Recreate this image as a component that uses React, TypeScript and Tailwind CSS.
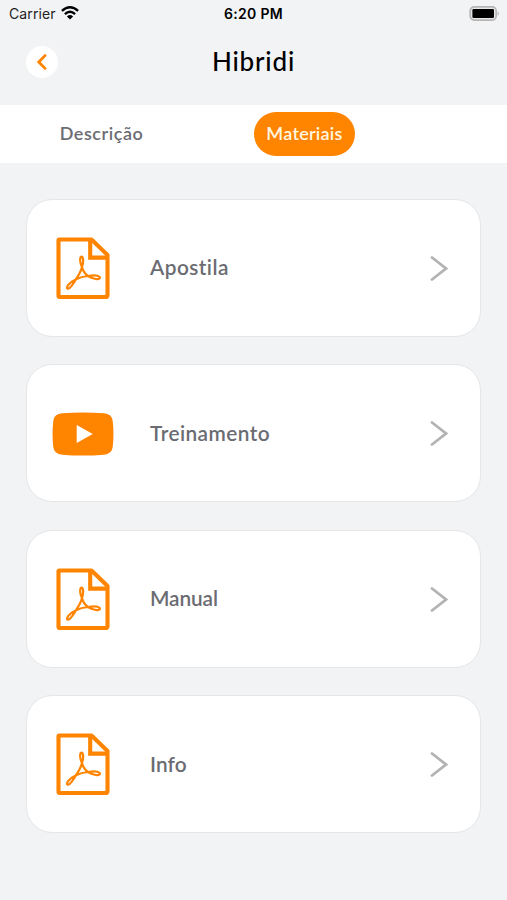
import type { ReactNode } from 'react'

type MaterialKind = 'pdf' | 'video'

interface Material {
  title: string
  kind: MaterialKind
  // letter spacing of the title
  tracking: string
}

const materials: Material[] = [
  { title: 'Apostila', kind: 'pdf', tracking: 'tracking-[0.45px]' },
  { title: 'Treinamento', kind: 'video', tracking: 'tracking-[0.45px]' },
  { title: 'Manual', kind: 'pdf', tracking: 'tracking-[-0.1px]' },
  { title: 'Info', kind: 'pdf', tracking: 'tracking-[0.1px]' }
]

function PdfIcon() {
  return (
    <svg width="54" height="62" viewBox="0 0 54 62" fill="none" stroke="#ff8400" aria-hidden="true">
      <path d="M3 2.5H35.5L51.5 18V58.5A1.5 1.5 0 0 1 50 60H4A1.5 1.5 0 0 1 2.5 58.5V3Z" strokeWidth="4.1" strokeLinejoin="round" />
      <path d="M34.2 3V20.6H51" strokeWidth="4.1" />
      <path
        d="M26 30C23.8 26 23.4 20 25.6 19.6C27.8 20 27.4 26 26 30C25.2 34 22.8 38 20 42.2C17.5 46.5 14.6 50.6 12.6 51.5C10.6 51.9 10.6 50.2 12 48.3C13.8 46 16.8 43.6 20 42.2C24 40.2 28 39.4 32 39C36.5 38.2 42 38.3 43.7 40C44.6 41.8 42.4 42.5 39.8 42C37 41.4 34.4 40.6 32 39C29 36.7 26.8 33.6 26 30Z"
        strokeWidth="2.2"
        strokeLinejoin="round"
      />
    </svg>
  )
}

function VideoIcon() {
  return (
    <svg className="mt-px" width="62" height="44" viewBox="0 0 62 44" aria-hidden="true">
      <path d="M10 1.3Q31-.5 52 1.3Q60 2 60.7 9Q62.2 22 60.7 35Q60 42 52 42.7Q31 44.5 10 42.7Q2 42 1.3 35Q-.2 22 1.3 9Q2 2 10 1.3Z" fill="#ff8400" />
      <path d="M24.7 13L40.7 22L24.7 31Z" fill="#fff" />
    </svg>
  )
}

const icons: Record<MaterialKind, ReactNode> = {
  pdf: <PdfIcon />,
  video: <VideoIcon />
}

function StatusBar() {
  return (
    <div className="grid h-7 grid-cols-3 items-center pr-[7px] pb-px pl-[9px] font-[Inter,sans-serif] text-black">
      <div className="flex items-center gap-[5px] text-[14px] text-[#222]">
        <span className="tracking-[0.1px]">Carrier</span>
        <svg className="-mt-0.5" width="18" height="14" viewBox="0 0 18 14" fill="none" stroke="#000" strokeWidth="2.4" aria-hidden="true">
          <path d="M.9 4.9Q9-2.3 17.1 4.9" />
          <path d="M3.9 8.1Q9 3.6 14.1 8.1" />
          <path d="M9 13.6L5.9 10.4Q9 7.8 12.1 10.4Z" fill="#000" stroke="none" />
        </svg>
      </div>
      <span className="-ml-0.5 text-center text-[14px] font-semibold tracking-[0.3px]">6:20 PM</span>
      <svg className="justify-self-end" width="31" height="15" viewBox="0 0 31 15" aria-hidden="true">
        <rect x="1.2" y=".9" width="26" height="13.2" rx="4" fill="#e8e8e9" stroke="#b5b5b6" strokeWidth="1.7" />
        <rect x="3.4" y="3" width="21.6" height="9" rx="1.3" fill="#000" />
        <path d="M28.7 5.2Q31 7.5 28.7 9.8Z" fill="#aaa" />
      </svg>
    </div>
  )
}

export default function App() {
  return (
    <div className="min-h-[900px] w-full bg-[#f2f3f5] font-[Lato,sans-serif]">
      <StatusBar />

      {/* Header */}
      <header className="grid h-[77px] grid-cols-[32px_1fr_32px] items-start px-[26px] pt-[18px]">
        <button type="button" aria-label="Voltar" className="flex h-8 w-8 items-center justify-center rounded-full bg-white">
          <svg width="10" height="16" viewBox="0 0 10 16" fill="none" stroke="#ff8400" strokeWidth="2.8" strokeLinecap="round" aria-hidden="true">
            <path d="M8 1.6L1.8 8L8 14.4" />
          </svg>
        </button>
        <h1 className="text-center text-[26px] leading-[30px] font-medium tracking-[0.8px] text-black">Hibridi</h1>
      </header>

      {/* Tabs */}
      <nav className="grid h-[58px] grid-cols-[203px_203px] items-center justify-items-center bg-white text-[18px] font-semibold">
        <button type="button" className="-mt-0.5 tracking-[0.55px] text-[#6b6c72]">
          Descrição
        </button>
        <button type="button" className="h-11 w-[101px] rounded-full bg-[#ff8400] pb-0.5 tracking-[0.25px] text-[#fff6e0]">
          Materiais
        </button>
      </nav>

      {/* Materials */}
      <ul className="flex flex-col gap-[27.4px] px-[26px] pt-9">
        {materials.map(({ title, kind, tracking }) => (
          <li key={title}>
            <button
              type="button"
              className="flex h-[138px] w-full items-center rounded-[26px] border border-[#e5e6e8] bg-white pr-8 pl-6 text-left"
            >
              <span className="flex w-[64px] justify-center">{icons[kind]}</span>
              <span className={`-mt-0.5 ml-[35px] flex-1 text-[20.8px] font-semibold text-[#6b6c72] ${tracking}`}>{title}</span>
              <svg width="18" height="26" viewBox="0 0 18 26" fill="none" stroke="#b3b3b3" strokeWidth="2.8" strokeLinecap="round" aria-hidden="true">
                <path d="M2 2.5L16 13.5L2 24.5" />
              </svg>
            </button>
          </li>
        ))}
      </ul>
    </div>
  )
}
